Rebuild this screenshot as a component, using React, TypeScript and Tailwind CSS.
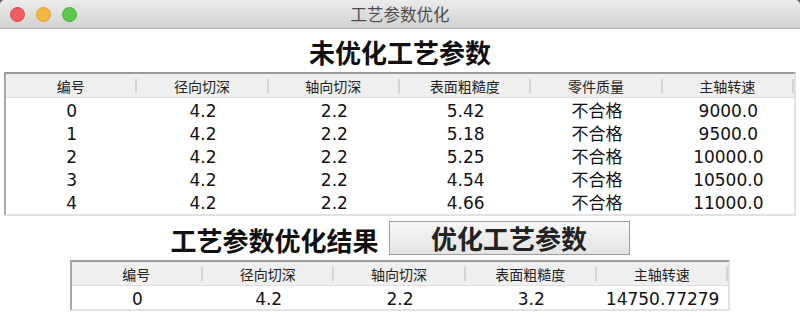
import React from "react";

const FONT = '"DejaVu Sans", "Noto Sans CJK SC", sans-serif';
const CJK = '"Noto Sans CJK SC", "DejaVu Sans", sans-serif';

type TableProps = { headers: string[]; rows: string[][] };

function Table({ headers, rows }: TableProps) {
  const colW = 131.33;
  return (
    <div
      className="flex flex-col border-t-2 border-l-2 border-t-[#9a9a9a] border-l-[#a8a8a8] border-r-2 border-r-[#e2e2e2] border-b-2 border-b-[#e2e2e2] bg-white"
      style={{ width: headers.length * colW + 4 }}
    >
      <div className="flex h-[24px] pt-[1px] bg-[#efefef] border-b border-[#dedede]">
        {headers.map((h, i) => (
          <div key={i} className="flex items-center" style={{ width: colW }}>
            <span
              className="flex-1 text-center text-[14px] leading-none text-[#222]"
              style={{ fontFamily: CJK }}
            >
              {h}
            </span>
            <div className="w-[2px] h-[14px] bg-[#d4d4d4]" />
          </div>
        ))}
      </div>
      {rows.map((r, ri) => (
        <div key={ri} className="flex h-[23.2px] items-center pt-[3px]">
          {r.map((c, ci) => (
            <div
              key={ci}
              className="text-center text-[17px] leading-none text-[#111]"
              style={{ width: colW, fontFamily: FONT }}
            >
              {c}
            </div>
          ))}
        </div>
      ))}
    </div>
  );
}

export default function App() {
  const h1 = ["编号", "径向切深", "轴向切深", "表面粗糙度", "零件质量", "主轴转速"];
  const r1 = [
    ["0", "4.2", "2.2", "5.42", "不合格", "9000.0"],
    ["1", "4.2", "2.2", "5.18", "不合格", "9500.0"],
    ["2", "4.2", "2.2", "5.25", "不合格", "10000.0"],
    ["3", "4.2", "2.2", "4.54", "不合格", "10500.0"],
    ["4", "4.2", "2.2", "4.66", "不合格", "11000.0"],
  ];
  const h2 = ["编号", "径向切深", "轴向切深", "表面粗糙度", "主轴转速"];
  const r2 = [["0", "4.2", "2.2", "3.2", "14750.77279"]];

  return (
    <div className="w-[800px] h-[318px] overflow-hidden bg-[#6e5a5e]">
      <div className="w-[800px] h-[318px] flex flex-col bg-white rounded-t-[5px] overflow-hidden">
        <div className="h-[29px] shrink-0 grid grid-cols-[1fr_auto_1fr] items-center bg-gradient-to-b from-[#ebebeb] to-[#d2d2d2] border-b border-[#b1b1b1]">
          <div className="flex items-center gap-[11px] pl-[10px]">
            <div className="w-[15px] h-[15px] rounded-full bg-[#ed5f5f] border border-[#d94a4a]" />
            <div className="w-[15px] h-[15px] rounded-full bg-[#f4b640] border border-[#dca034]" />
            <div className="w-[15px] h-[15px] rounded-full bg-[#5cc84c] border border-[#4aae3c]" />
          </div>
          <div
            className="text-[16.5px] leading-none text-[#4c4c4c] pt-[1px]"
            style={{ fontFamily: CJK }}
          >
            工艺参数优化
          </div>
          <div />
        </div>
        <div className="flex flex-col items-center">
          <div
            className="mt-[8px] h-[30px] flex items-center text-[26px] font-bold leading-none text-[#111]"
            style={{ fontFamily: CJK }}
          >
            未优化工艺参数
          </div>
          <div className="mt-[5px]">
            <Table headers={h1} rows={r1} />
          </div>
          <div className="mt-[5px] flex items-center gap-[10px]">
            <div
              className="text-[26px] font-bold leading-none text-[#111] pt-[4px]"
              style={{ fontFamily: CJK }}
            >
              工艺参数优化结果
            </div>
            <div
              className="w-[241px] h-[34px] flex items-center justify-center border border-[#9e9e9e] bg-gradient-to-b from-[#f7f7f7] to-[#e3e3e3] text-[26px] font-bold leading-none text-[#222]"
              style={{ fontFamily: CJK }}
            >
              优化工艺参数
            </div>
          </div>
          <div className="mt-[5px]">
            <Table headers={h2} rows={r2} />
          </div>
        </div>
      </div>
    </div>
  );
}
